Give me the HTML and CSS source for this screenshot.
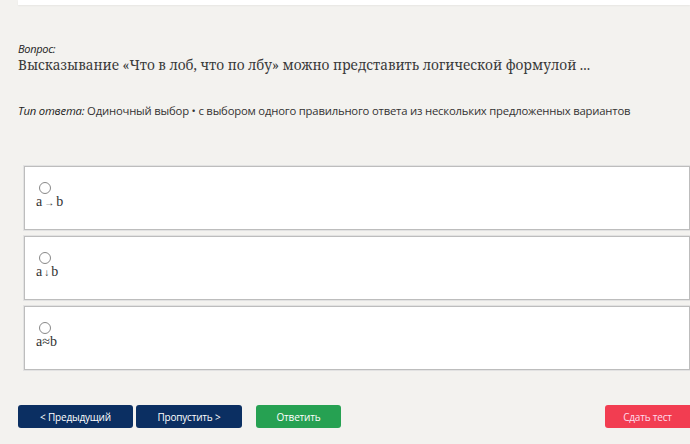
FILE: index.html
```html
<!DOCTYPE html>
<html lang="ru">
<head>
    <meta charset="UTF-8">
    <title>Тест</title>
    <link rel="stylesheet" href="styles.css">
</head>
<body>
    <div class="top-bar"></div>

    <div class="question">
        <div class="label">Вопрос:</div>
        <div class="question-text">Высказывание «Что в лоб, что по лбу» можно представить логической формулой ...</div>
    </div>

    <div class="answer-type">
        <i>Тип ответа:</i> Одиночный выбор • с выбором одного правильного ответа из нескольких предложенных вариантов
    </div>

    <div class="options">
        <div class="option">
            <span class="radio"></span>
            <div class="option-text">a<span class="sym">→</span>b</div>
        </div>
        <div class="option">
            <span class="radio"></span>
            <div class="option-text">a<span class="sym">↓</span>b</div>
        </div>
        <div class="option">
            <span class="radio"></span>
            <div class="option-text">a≈b</div>
        </div>
    </div>

    <div class="buttons">
        <button class="btn btn-navy btn-prev">&lt; Предыдущий</button>
        <button class="btn btn-navy btn-skip">Пропустить &gt;</button>
        <button class="btn btn-green">Ответить</button>
        <button class="btn btn-red">Сдать тест</button>
    </div>
</body>
</html>
```

FILE: styles.css
```css
body {
    margin: 0;
    padding: 0;
    background: #f3f2ef;
    font-family: 'Open Sans', sans-serif;
    color: #333;
}

.top-bar {
    margin-left: 18px;
    height: 5px;
    background: #fff;
    box-shadow: 0 1px 2px rgba(0, 0, 0, 0.05);
}

.question {
    padding: 37px 0 0 18px;
}

.label {
    font-style: italic;
    font-size: 11px;
    line-height: 14px;
    color: #222;
    letter-spacing: -0.3px;
}

.question-text {
    font-family: 'Noto Serif', 'DejaVu Serif', serif;
    font-size: 13.6px;
    line-height: 18px;
    color: #3a3a3a;
}

.answer-type {
    padding: 29px 0 0 18px;
    font-size: 11.3px;
    line-height: 16px;
    color: #333;
    letter-spacing: -0.2px;
}

.answer-type i {
    color: #222;
}

.options {
    padding: 47px 0 0 24px;
    display: flex;
    flex-direction: column;
    gap: 6px;
}

.option {
    height: 64px;
    background: #fff;
    border: 1px solid #bdbdbd;
    box-shadow: 0 0 0 1px #e2e2e2;
    padding: 15px 0 0 11px;
    box-sizing: border-box;
}

.radio {
    display: block;
    width: 10px;
    height: 10px;
    margin-left: 3px;
    border: 1px solid #888;
    border-radius: 50%;
}

.option-text {
    font-family: 'Liberation Serif', serif;
    font-size: 14px;
    line-height: 15px;
    color: #333;
}

.option-text .sym {
    font-size: 10px;
    padding: 0 2px;
}

.buttons {
    display: flex;
    padding: 35px 0 0 18px;
}

.btn {
    display: block;
    height: 23px;
    border: none;
    border-radius: 3px;
    color: #fff;
    font-family: 'Open Sans', sans-serif;
    font-size: 10px;
    letter-spacing: -0.2px;
    padding: 0;
    margin: 0;
    cursor: pointer;
}

.btn-navy {
    background: #0b2f62;
}

.btn-prev {
    width: 115px;
}

.btn-skip {
    width: 106px;
    margin-left: 3px;
}

.btn-green {
    width: 85px;
    margin-left: 14px;
    background: #26a152;
}

.btn-red {
    width: 85px;
    margin-left: auto;
    background: #f23d51;
    border-radius: 3px 0 0 3px;
    color: #fde;
}
```
